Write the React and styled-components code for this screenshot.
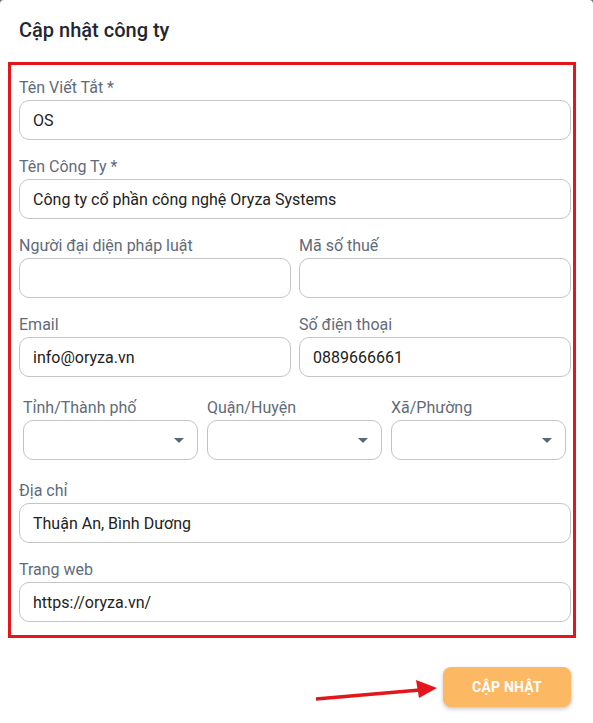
import React from 'react';
import styled, { createGlobalStyle } from 'styled-components';

const GlobalStyle = createGlobalStyle`
  html, body {
    margin: 0;
    padding: 0;
    background: #6f6f6f;
    font-family: Roboto, "Noto Sans", sans-serif;
  }
  * { box-sizing: border-box; }
`;

const Dialog = styled.div`
  background: #fff;
  min-height: 100vh;
  border-radius: 4px 4px 0 0;
  overflow: hidden;
`;

const Title = styled.h2`
  margin: 0;
  padding: 17px 19px 0;
  height: 62px;
  font-size: 20px;
  font-weight: 500;
  line-height: 26px;
  color: #1f2733;
`;

const FormBox = styled.div`
  margin: 0 17px 0 8px;
  border: 3px solid #e3161b;
  padding: 13px 2px 13px 8px;
  display: flex;
  flex-direction: column;
  gap: 17px;
`;

const Row = styled.div`
  display: grid;
  grid-template-columns: ${p => `repeat(${p.cols || 1}, 1fr)`};
  column-gap: ${p => p.cols === 3 ? '9px' : '8px'};
  padding: ${p => p.cols === 3 ? '4px 5px 4px 4px' : '0'};
`;

const Field = styled.div`
  display: flex;
  flex-direction: column;
`;

const Label = styled.label`
  display: block;
  font-size: 16px;
  line-height: 20px;
  margin-bottom: 2px;
  color: #5f6b7a;
`;

const Input = styled.input`
  width: 100%;
  height: 40px;
  border: 1px solid #c4c4c4;
  border-radius: 10px;
  padding: 0 13px;
  font-family: Roboto, sans-serif;
  font-size: 16px;
  color: #222;
  background: #fff;
  outline: none;
`;

const SelectBox = styled.div`
  position: relative;
  height: 40px;
  border: 1px solid #c4c4c4;
  border-radius: 10px;
  background: #fff;
`;

const Caret = styled.span`
  position: absolute;
  right: 13px;
  top: 17px;
  width: 0;
  height: 0;
  border-left: 5px solid transparent;
  border-right: 5px solid transparent;
  border-top: 5px solid #5b6777;
`;

const Footer = styled.div`
  position: relative;
  display: flex;
  justify-content: flex-end;
  padding: 29px 22px 0 0;
`;

const Button = styled.button`
  width: 128px;
  height: 40px;
  border: none;
  border-radius: 8px;
  background: #fdb863;
  color: #fff;
  font-family: Roboto, sans-serif;
  font-weight: 700;
  font-size: 14px;
  letter-spacing: 0.2px;
  box-shadow: 0 2px 4px rgba(0, 0, 0, 0.22);
`;

const Arrow = styled.svg`
  position: absolute;
  left: 312px;
  top: 38px;
`;

const TextField = ({ label, value }) => (
  <Field>
    <Label>{label}</Label>
    <Input readOnly value={value || ''} />
  </Field>
);

const SelectField = ({ label }) => (
  <Field>
    <Label>{label}</Label>
    <SelectBox><Caret /></SelectBox>
  </Field>
);

const App = () => (
  <>
    <GlobalStyle />
    <Dialog>
      <Title>Cập nhật công ty</Title>
      <FormBox>
        <TextField label="Tên Viết Tắt *" value="OS" />
        <TextField label="Tên Công Ty *" value="Công ty cổ phần công nghệ Oryza Systems" />
        <Row cols={2}>
          <TextField label="Người đại diện pháp luật" />
          <TextField label="Mã số thuế" />
        </Row>
        <Row cols={2}>
          <TextField label="Email" value="info@oryza.vn" />
          <TextField label="Số điện thoại" value="0889666661" />
        </Row>
        <Row cols={3}>
          <SelectField label="Tỉnh/Thành phố" />
          <SelectField label="Quận/Huyện" />
          <SelectField label="Xã/Phường" />
        </Row>
        <TextField label="Địa chỉ" value="Thuận An, Bình Dương" />
        <TextField label="Trang web" value="https://oryza.vn/" />
      </FormBox>
      <Footer>
        <Arrow width="130" height="30" viewBox="0 0 130 30">
          <line x1="4" y1="23" x2="108" y2="14" stroke="#e3161b" strokeWidth="3.5" />
          <polygon points="104,4 125,12 107,22" fill="#e3161b" />
        </Arrow>
        <Button>CẬP NHẬT</Button>
      </Footer>
    </Dialog>
  </>
);

export default App;
